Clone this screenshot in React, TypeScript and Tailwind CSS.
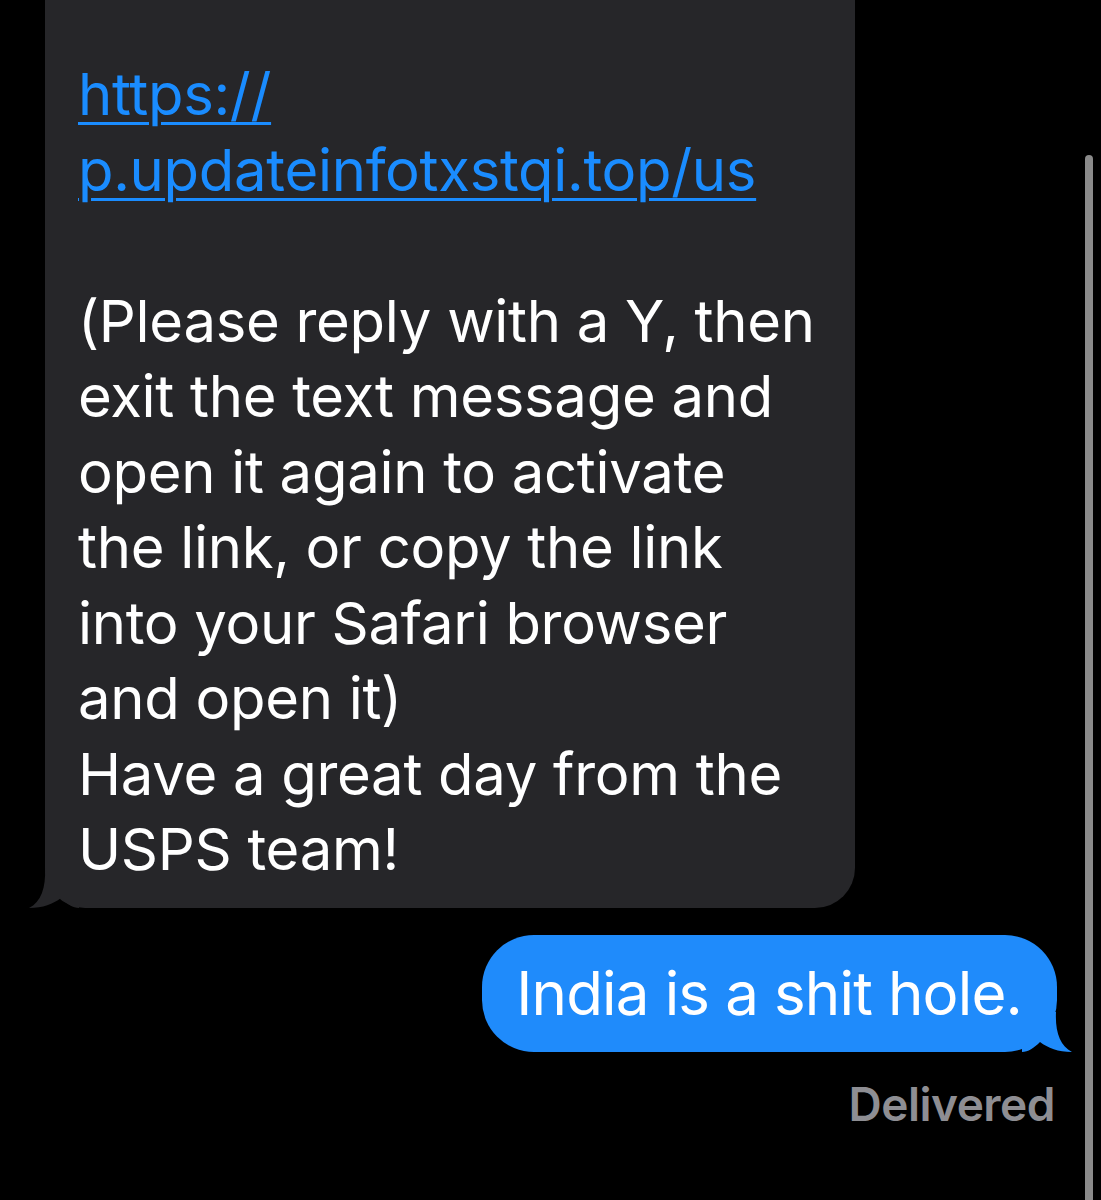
import React from "react";

const lines = [
  "(Please reply with a Y, then",
  "exit the text message and",
  "open it again to activate",
  "the link, or copy the link",
  "into your Safari browser",
  "and open it)",
  "Have a great day from the",
  "USPS team!",
];

const App = () => {
  return (
    <div
      className="relative w-[1101px] h-[1200px] overflow-hidden bg-black"
      style={{ fontFamily: "Inter, 'Liberation Sans', sans-serif" }}
    >
      <div className="flex flex-col">
        {/* incoming */}
        <div className="relative ml-[45px] w-[810px] bg-[#262629] rounded-b-[40px] pl-[33px] pt-[57px] pb-[20px] text-[58px] leading-[75.5px] text-white tracking-[-0.3px]">
          <a className="block text-[#1a8cff] underline decoration-[3px] underline-offset-[7px]">
            https://
          </a>
          <a className="block text-[#1a8cff] underline decoration-[3px] underline-offset-[7px]">
            p.updateinfotxstqi.top/us
          </a>
          <div className="h-[75.5px]" />
          {lines.map((l, i) => (
            <div key={i} className="whitespace-nowrap">
              {l}
            </div>
          ))}
          <svg
            className="absolute left-[-16px] bottom-0"
            width="50"
            height="40"
            viewBox="0 0 50 40"
          >
            <path d="M16 0 C17 20 12 34 0 40 C14 40 24 36 32 30 C38 36 44 40 50 40 L50 0 Z" fill="#262629" />
          </svg>
        </div>

        {/* outgoing */}
        <div className="flex justify-end pr-[44px] mt-[27px]">
          <div className="relative bg-[#1f8bfb] rounded-[52px] h-[117px] pl-[34px] pr-[35px] flex items-center text-white text-[60px] tracking-[-0.85px]">
            India is a shit hole.
            <svg
              className="absolute right-[-15px] bottom-0"
              width="50"
              height="40"
              viewBox="0 0 50 40"
            >
              <path d="M34 0 C33 20 38 34 50 40 C36 40 26 36 18 30 C12 36 6 40 0 40 L0 0 Z" fill="#1f8bfb" />
            </svg>
          </div>
        </div>
        <div className="flex justify-end pr-[46px] mt-[28px] text-[46px] leading-[48px] font-semibold text-[#8e8e93] tracking-[-0.5px]">
          Delivered
        </div>
      </div>

      {/* scroll indicator */}
      <div className="absolute left-[1085px] top-[155px] w-[8px] h-[1060px] rounded-full bg-[#8a8a8a]" />
    </div>
  );
};

export default App;
